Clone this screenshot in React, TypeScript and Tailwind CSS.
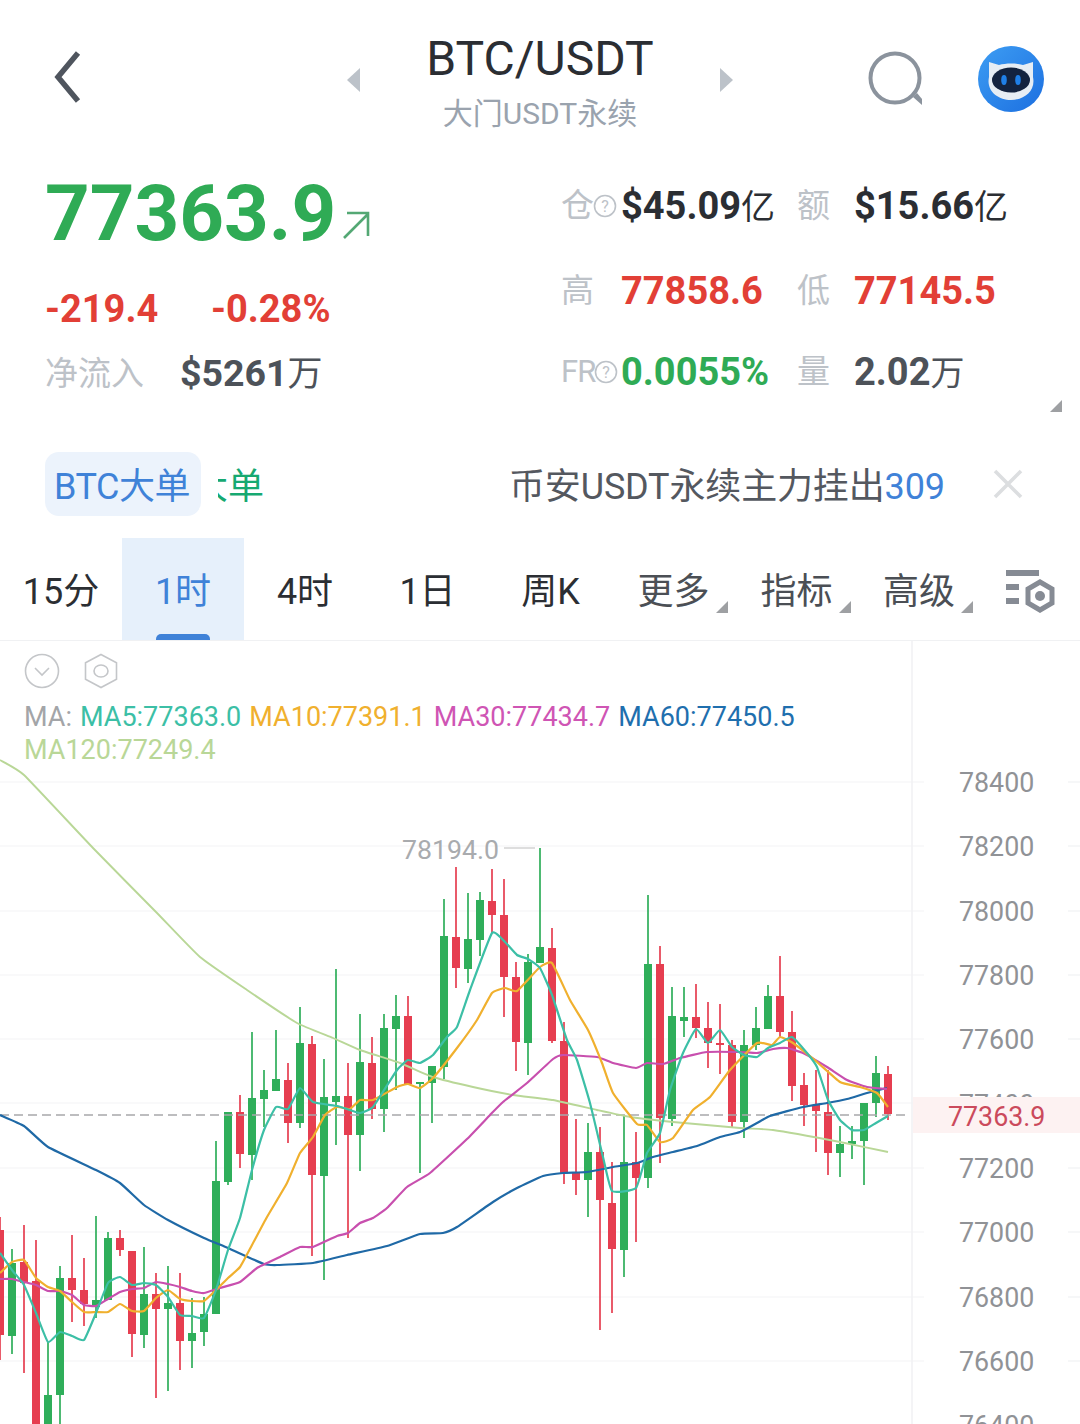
import React from "react";

const GREEN = "#2fae5a";
const RED = "#e63e50";

// x, wickTop, wickBottom, bodyTop, bodyBottom, colour
const K: [number, number, number, number, number, "g" | "r"][] = [
  [0, 1217, 1360, 1230, 1335, "r"], [12, 1249, 1354, 1263, 1336, "g"], [24, 1225, 1373, 1262, 1283, "r"],
  [36, 1240, 1430, 1281, 1430, "r"], [48, 1342, 1430, 1395, 1430, "g"], [60, 1266, 1430, 1278, 1395, "g"],
  [72, 1235, 1322, 1278, 1290, "r"], [84, 1258, 1326, 1290, 1304, "r"], [96, 1216, 1318, 1300, 1307, "g"],
  [108, 1232, 1300, 1238, 1300, "g"], [120, 1230, 1256, 1238, 1250, "r"], [132, 1251, 1357, 1251, 1334, "r"],
  [144, 1247, 1348, 1294, 1335, "g"], [156, 1273, 1398, 1294, 1309, "r"], [168, 1266, 1391, 1303, 1309, "g"],
  [180, 1273, 1370, 1303, 1341, "r"], [192, 1298, 1368, 1333, 1341, "g"], [204, 1297, 1346, 1314, 1332, "g"],
  [216, 1141, 1314, 1181, 1314, "g"], [228, 1112, 1185, 1112, 1182, "g"], [240, 1095, 1168, 1112, 1154, "r"],
  [252, 1032, 1180, 1098, 1155, "g"], [264, 1070, 1127, 1090, 1099, "g"], [276, 1030, 1091, 1079, 1091, "g"],
  [288, 1063, 1143, 1080, 1123, "r"], [300, 1007, 1128, 1043, 1123, "g"], [312, 1036, 1256, 1044, 1175, "r"],
  [324, 1059, 1280, 1097, 1176, "g"], [336, 969, 1145, 1096, 1102, "g"], [348, 1063, 1238, 1096, 1135, "r"],
  [360, 1014, 1171, 1062, 1135, "g"], [372, 1037, 1119, 1063, 1109, "r"], [384, 1014, 1132, 1028, 1109, "g"],
  [396, 995, 1090, 1016, 1029, "g"], [408, 996, 1084, 1016, 1084, "r"], [420, 1082, 1173, 1082, 1084, "g"],
  [432, 1066, 1123, 1066, 1083, "g"], [444, 899, 1079, 936, 1067, "g"], [456, 867, 988, 937, 968, "r"],
  [468, 893, 983, 939, 969, "g"], [480, 892, 956, 900, 940, "g"], [492, 869, 933, 901, 915, "r"],
  [504, 879, 1017, 915, 977, "r"], [516, 962, 1071, 977, 1042, "r"], [528, 954, 1075, 962, 1043, "g"],
  [540, 848, 963, 947, 963, "g"], [552, 928, 1043, 948, 1041, "r"], [564, 1022, 1184, 1041, 1173, "r"],
  [576, 1119, 1195, 1173, 1180, "r"], [588, 1123, 1217, 1152, 1180, "g"], [600, 1127, 1330, 1152, 1200, "r"],
  [612, 1162, 1313, 1203, 1249, "r"], [624, 1115, 1277, 1162, 1250, "g"], [636, 1132, 1242, 1162, 1178, "r"],
  [648, 895, 1188, 964, 1178, "g"], [660, 946, 1163, 964, 1118, "r"], [672, 987, 1126, 1016, 1119, "g"],
  [684, 987, 1037, 1017, 1021, "g"], [696, 984, 1038, 1017, 1028, "r"], [708, 1002, 1068, 1028, 1043, "r"],
  [720, 1004, 1074, 1043, 1045, "r"], [732, 1040, 1127, 1045, 1122, "r"], [744, 1030, 1138, 1045, 1122, "g"],
  [756, 1007, 1050, 1028, 1045, "g"], [768, 985, 1029, 996, 1029, "g"], [780, 956, 1037, 996, 1032, "r"],
  [792, 1011, 1101, 1032, 1086, "r"], [804, 1073, 1126, 1085, 1105, "r"], [816, 1070, 1152, 1105, 1111, "r"],
  [828, 1070, 1175, 1112, 1153, "r"], [840, 1126, 1177, 1144, 1153, "g"], [852, 1126, 1159, 1141, 1144, "g"],
  [864, 1103, 1185, 1103, 1141, "g"], [876, 1056, 1117, 1073, 1103, "g"], [888, 1066, 1120, 1074, 1114, "r"],
];

const MA5 = "0,1253 12,1270 24,1285 36,1313 48,1342 60,1332 72,1336 84,1340 96,1313 108,1283 120,1277 132,1285 144,1283 156,1285 168,1297 180,1315 192,1316 204,1318 216,1290 228,1250 240,1218 252,1170 264,1130 276,1107 288,1109 300,1088 313,1102 337,1106 350,1110 360,1113 373,1107 397,1070 408,1060 420,1063 433,1055 447,1037 457,1027 470,990 492,933 505,942 517,955 528,959 540,968 552,995 567,1040 577,1060 590,1103 603,1157 612,1191 636,1188 647,1153 660,1133 670,1090 683,1053 696,1029 708,1043 720,1030 732,1047 744,1055 757,1057 768,1048 780,1043 792,1037 807,1053 817,1067 828,1100 840,1120 852,1130 864,1130 876,1123 888,1116";
const MA10 = "0,1273 12,1262 24,1260 36,1278 48,1287 60,1291 72,1302 84,1312 96,1312 108,1312 120,1304 132,1311 144,1311 156,1298 168,1290 180,1299 192,1301 204,1301 216,1290 228,1278 240,1267 252,1245 267,1217 287,1183 300,1153 313,1137 325,1115 337,1107 350,1109 360,1100 373,1100 397,1087 408,1084 420,1088 433,1078 457,1048 477,1020 492,993 505,988 517,991 540,967 552,963 570,1000 588,1030 602,1063 613,1093 637,1124 647,1125 660,1142 673,1138 693,1110 710,1097 730,1070 757,1043 772,1045 780,1037 793,1043 817,1062 840,1082 860,1087 877,1093 888,1107";
const MA30 = "0,1279 12,1279 24,1282 36,1285 48,1291 60,1291 72,1295 84,1305 96,1306 108,1299 120,1292 132,1289 144,1288 156,1282 168,1284 180,1287 192,1291 204,1293 220,1288 240,1282 257,1268 280,1257 300,1247 313,1247 337,1236 348,1233 360,1223 373,1218 387,1208 407,1187 430,1173 467,1139 490,1115 503,1102 527,1083 553,1059 563,1055 597,1057 613,1063 636,1068 647,1063 663,1064 680,1058 707,1052 740,1052 757,1053 773,1049 787,1048 803,1053 827,1067 847,1080 867,1087 887,1089";
const MA60 = "0,1115 24,1126 48,1147 96,1170 120,1183 144,1205 168,1220 204,1238 228,1248 264,1264 277,1265 313,1263 347,1255 387,1246 420,1234 443,1233 457,1227 493,1202 517,1188 543,1176 563,1173 587,1172 613,1167 637,1163 653,1157 673,1152 697,1146 720,1137 740,1132 757,1123 770,1116 803,1107 827,1103 847,1099 867,1093 887,1088";
const MA120 = "0,760 24,775 93,848 157,913 200,957 247,990 297,1023 333,1038 360,1050 400,1063 433,1077 473,1087 513,1095 553,1100 597,1110 630,1117 673,1122 740,1128 773,1130 840,1142 888,1152";

function smooth(s: string) {
  const p = s.split(" ").map((a) => a.split(",").map(Number));
  let d = `M${p[0][0]} ${p[0][1]}`;
  for (let i = 0; i < p.length - 1; i++) {
    const a = p[Math.max(i - 1, 0)], b = p[i], c = p[i + 1], e = p[Math.min(i + 2, p.length - 1)];
    const t = 0.07;
    d += `C${b[0] + (c[0] - a[0]) * t} ${b[1] + (c[1] - a[1]) * t} ${c[0] - (e[0] - b[0]) * t} ${c[1] - (e[1] - b[1]) * t} ${c[0]} ${c[1]}`;
  }
  return d;
}

const GRID = [782, 846, 911, 975, 1039, 1103, 1168, 1232, 1297, 1361];
const PRICES: [string, string][] = [
  ["78400", "h-[64px]"], ["78200", "h-[65px]"], ["78000", "h-[64px]"], ["77800", "h-[64px]"], ["77600", "h-[65px]"],
  ["77400", "h-[64px]"], ["77200", "h-[64px]"], ["77000", "h-[65px]"], ["76800", "h-[64px]"], ["76600", "h-[64px]"], ["76400", "h-[64px]"],
];

const font = "font-['Roboto','Noto_Sans_CJK_SC',sans-serif]";

function Chart() {
  const Y = 640;
  const lines: [string, string, number][] = [
    [MA120, "#b9d797", 1.9],
    [MA60, "#1f69a6", 2.2],
    [MA30, "#c84fae", 2.2],
    [MA10, "#f0b02e", 2.2],
    [MA5, "#3cbfa6", 2.2],
  ];
  return (
    <svg width="1080" height="784" viewBox={`0 ${Y} 1080 784`} className="block">
      {GRID.map((g) => (
        <g key={g}>
          <line x1="0" x2="924" y1={g} y2={g} stroke="#f3f4f6" strokeWidth="1.2" />
          <line x1="1068" x2="1080" y1={g} y2={g} stroke="#f0f1f3" strokeWidth="1.2" />
        </g>
      ))}
      <line x1="912" x2="912" y1={Y} y2="1424" stroke="#f0f1f3" strokeWidth="1.5" />
      {K.map(([x, wt, wb, bt, bb, c]) => {
        const col = c === "g" ? GREEN : RED;
        return (
          <g key={x}>
            <line x1={x} x2={x} y1={wt} y2={wb} stroke={col} strokeWidth="1.7" />
            <rect x={x - 4} y={bt} width="8" height={Math.max(bb - bt, 1.5)} fill={col} />
          </g>
        );
      })}
      <line x1="0" x2="910" y1="1115" y2="1115" stroke="#a8a8aa" strokeWidth="1.6" strokeDasharray="9 5" />
      {lines.map(([d, c, w]) => (
        <path key={c} d={smooth(d)} fill="none" stroke={c} strokeWidth={w} strokeLinejoin="round" />
      ))}
      <line x1="504" x2="535" y1="848" y2="848" stroke="#c8c8c8" strokeWidth="1.2" />
    </svg>
  );
}

function Corner({ className }: { className: string }) {
  return (
    <svg width="12" height="12" viewBox="0 0 12 12" className={className}>
      <path d="M12 0V12H0Z" fill="#9ea0a3" />
    </svg>
  );
}

function Tab({ label, w, more, active }: { label: string; w: string; more?: boolean; active?: boolean }) {
  return (
    <div className={`relative flex h-full shrink-0 items-center justify-center pt-[6px] ${w} ${active ? "bg-[#e6f0fb] text-[#3f82d8]" : more ? "text-[#4b4f55]" : "text-[#2b2e33]"}`}>
      <span>{label}</span>
      {more && <Corner className="absolute bottom-[27px] right-[7px]" />}
      {active && <span className="absolute bottom-0 left-[34px] h-[6px] w-[54px] rounded-t-[5px] bg-[#3f82d8]" />}
    </div>
  );
}

export default function App() {
  const rows = [
    { a: "仓", q: true, v: "$45.09", vu: "亿", vc: "text-[#2b2e33]", b: "额", w: "$15.66", wu: "亿", wc: "text-[#2b2e33]", mt: "" },
    { a: "高", v: "77858.6", vu: "", vc: "text-[#e23f36]", b: "低", w: "77145.5", wu: "", wc: "text-[#e23f36]", mt: "mt-[41px]" },
    { a: "FR", q: true, v: "0.0055%", vu: "", vc: "text-[#2fab55]", b: "量", w: "2.02", wu: "万", wc: "text-[#4d5259]", mt: "mt-[37px]" },
  ];
  return (
    <div className={`relative h-[1424px] w-[1080px] overflow-hidden bg-white ${font}`}>
      {/* Header */}
      <header className="relative flex h-[160px] items-start">
        <svg width="40" height="60" viewBox="0 0 40 60" className="ml-[48px] mt-[47px] shrink-0">
          <path d="M30 6 L10 30 L30 54" fill="none" stroke="#4f555e" strokeWidth="5.5" />
        </svg>
        <svg width="16" height="26" viewBox="0 0 16 26" className="ml-[257px] mt-[67px] shrink-0">
          <path d="M15 1V25L2 13Z" fill="#bcc2c9" />
        </svg>
        <div className="flex w-[358px] shrink-0 flex-col items-center pt-[32px]">
          <div className="text-[48px] leading-[54px] text-[#2b2e33]">BTC/USDT</div>
          <div className="mt-[9px] text-[30px] leading-[38px] text-[#9aa3ae]">大门USDT永续</div>
        </div>
        <svg width="16" height="26" viewBox="0 0 16 26" className="mt-[67px] shrink-0">
          <path d="M1 1V25L14 13Z" fill="#bcc2c9" />
        </svg>
        <svg width="60" height="60" viewBox="0 0 60 60" className="ml-[133px] mt-[50px] shrink-0">
          <circle cx="27" cy="28" r="24.5" fill="none" stroke="#8b939d" strokeWidth="4" />
          <path d="M49 43 L54 49 V55 L45 47Z" fill="#8b939d" />
        </svg>
        <svg width="68" height="68" viewBox="0 0 68 68" className="ml-[49px] mt-[45px] shrink-0">
          <defs>
            <linearGradient id="b" x1="0" y1="0" x2="1" y2="1">
              <stop offset="0" stopColor="#3d9df3" />
              <stop offset="1" stopColor="#1c6fe0" />
            </linearGradient>
          </defs>
          <circle cx="34" cy="34" r="33" fill="url(#b)" />
          <path d="M12 17 L22 20 C29 18 39 18 46 20 L56 17 L56 32 C59 46 47 55 34 55 C21 55 9 46 12 32Z" fill="#e6edf4" />
          <ellipse cx="34" cy="35" rx="19" ry="12.5" fill="#13233f" />
          <ellipse cx="27" cy="35" rx="2.8" ry="5" fill="#1f7fe6" />
          <ellipse cx="41" cy="35" rx="2.8" ry="5" fill="#1f7fe6" />
        </svg>
      </header>

      {/* Stats */}
      <section className="relative flex h-[260px] items-start">
        <div className="ml-[45px] w-[516px] shrink-0 pt-[9px]">
          <div className="flex items-end">
            <span className="text-[78px] font-bold leading-[90px] text-[#2fab55]">77363.9</span>
            <svg width="30" height="30" viewBox="0 0 30 30" className="mb-[19px] ml-[5px] shrink-0">
              <path d="M3 28 L27 4 M6 3 H27 V26" fill="none" stroke="#54a874" strokeWidth="2.6" />
            </svg>
          </div>
          <div className="mt-[27px] flex text-[38px] font-bold leading-[46px] text-[#e23f36]">
            <span className="w-[166px]">-219.4</span>
            <span>-0.28%</span>
          </div>
          <div className="mt-[19px] flex items-center leading-[44px]">
            <span className="w-[135px] text-[33px] text-[#bdc2c8]">净流入</span>
            <span className="text-[37.5px] font-bold text-[#4d5259]">$5261<span className="text-[35px] font-normal">万</span></span>
          </div>
        </div>
        <div className="flex-1 pt-[24px]">
          {rows.map((r, i) => (
            <div key={i} className={`flex h-[44px] items-center ${r.mt}`}>
              <div className="flex w-[60px] shrink-0 items-center text-[33px] text-[#bdc2c8]">
                <span className={r.a === "FR" ? "text-[31px] tracking-[-1px]" : ""}>{r.a}</span>
                {r.q && (
                  <svg width="24" height="24" viewBox="0 0 24 24" className="ml-[-1px] shrink-0">
                    <circle cx="12" cy="12" r="10.5" fill="none" stroke="#bdc2c8" strokeWidth="1.6" />
                    <text x="12" y="18" textAnchor="middle" fontSize="16" fill="#bdc2c8">?</text>
                  </svg>
                )}
              </div>
              <span className={`w-[176px] shrink-0 whitespace-nowrap text-[38px] font-bold ${r.vc}`}>
                {r.v}
                {r.vu && <span className="text-[34px] font-normal">{r.vu}</span>}
              </span>
              <span className="w-[57px] shrink-0 text-[33px] text-[#bdc2c8]">{r.b}</span>
              <span className={`whitespace-nowrap text-[38px] font-bold ${r.wc}`}>
                {r.w}
                {r.wu && <span className="text-[34px] font-normal">{r.wu}</span>}
              </span>
            </div>
          ))}
        </div>
        <Corner className="absolute bottom-[8px] right-[18px]" />
      </section>

      {/* Ticker */}
      <section className="relative flex h-[118px] items-start overflow-hidden text-[36px]">
        <div className="ml-[45px] mt-[32px] flex h-[64px] w-[156px] shrink-0 items-center justify-center rounded-[14px] bg-[#ecf3fc] pr-[2px] pt-[6px] tracking-[-0.5px] text-[#3f82d8]">BTC大单</div>
        <div className="relative ml-[17px] mt-[32px] h-[64px] w-[46px] shrink-0 overflow-hidden text-[#16a971]">
          <span className="absolute right-0 top-[13px] whitespace-nowrap leading-[44px]">大单</span>
        </div>
        <div className="ml-[245px] mt-[32px] flex h-[64px] shrink-0 items-center whitespace-nowrap pt-[6px] tracking-[-0.15px] text-[#54585f]">
          币安USDT永续主力挂出<span className="text-[#3f82d8]">309</span>
        </div>
        <svg width="32" height="32" viewBox="0 0 32 32" className="ml-[47px] mt-[48px] shrink-0">
          <path d="M3 3 L29 29 M29 3 L3 29" stroke="#dcdee0" strokeWidth="3.6" />
        </svg>
      </section>

      {/* Tabs */}
      <nav className="relative flex h-[102px] items-stretch text-[36px]">
        <Tab label="15分" w="w-[122px]" />
        <Tab label="1时" w="w-[122px]" active />
        <Tab label="4时" w="w-[122px]" />
        <Tab label="1日" w="w-[123px]" />
        <Tab label="周K" w="w-[123px]" />
        <Tab label="更多" w="w-[123px]" more />
        <Tab label="指标" w="w-[123px]" more />
        <Tab label="高级" w="w-[122px]" more />
        <svg width="50" height="46" viewBox="0 0 50 46" className="ml-[25px] mt-[31px] shrink-0">
          <path d="M1 1H34V7H1ZM1 15H14V21H1ZM1 29H14V35H1Z" fill="#868b94" />
          <path d="M35 13 L47 20 V34 L35 41 L23 34 V20Z" fill="none" stroke="#868b94" strokeWidth="5" />
          <circle cx="35" cy="27" r="5" fill="#868b94" />
        </svg>
      </nav>

      {/* Chart */}
      <section className="relative h-[784px]">
        <Chart />
        <div className="absolute inset-x-0 top-0 h-px bg-[#f0f1f3]" />
        <div className="absolute left-[24px] top-[13px] flex items-center gap-[23px]">
          <svg width="36" height="36" viewBox="0 0 36 36" className="shrink-0">
            <circle cx="18" cy="18" r="16.5" fill="none" stroke="#c4c6c9" strokeWidth="1.6" />
            <path d="M11 15 L18 22 L25 15" fill="none" stroke="#c4c6c9" strokeWidth="1.6" />
          </svg>
          <svg width="36" height="36" viewBox="0 0 36 36" className="shrink-0">
            <path d="M18 1.5 L33.5 9.8 V26.2 L18 34.5 L2.5 26.2 V9.8Z" fill="none" stroke="#c4c6c9" strokeWidth="1.6" />
            <ellipse cx="18" cy="18" rx="7" ry="6" fill="none" stroke="#c4c6c9" strokeWidth="1.6" />
          </svg>
        </div>
        <div className="absolute left-[24px] top-[61px] w-[860px] text-[27px] leading-[33px]">
          <div className="flex gap-[8px] whitespace-nowrap">
            <span className="text-[#a3a5a8]">MA:</span>
            <span className="text-[#3cbfa6]">MA5:77363.0</span>
            <span className="text-[#f0b02e]">MA10:77391.1</span>
            <span className="text-[#cf55b4]">MA30:77434.7</span>
            <span className="text-[#1f6fae]">MA60:77450.5</span>
          </div>
          <div className="text-[#b9d797]">MA120:77249.4</div>
        </div>
        <span className="absolute left-[402px] top-[193px] text-[26.7px] leading-[34px] text-[#a9abae]">78194.0</span>

        {/* Price axis */}
        <div className="absolute left-[912px] top-[125px] flex w-[168px] flex-col">
          {PRICES.map(([p, h]) => (
            <div key={p} className={`shrink-0 pl-[47px] text-[26.8px] leading-[36px] text-[#909296] ${h}`}>{p}</div>
          ))}
        </div>
        <div className="absolute left-[913px] top-[457px] flex h-[36px] w-[167px] items-center bg-[#fdf2f2] pl-[35px] pt-[4px] text-[26.8px] text-[#cb4a5c]">77363.9</div>
      </section>
    </div>
  );
}
